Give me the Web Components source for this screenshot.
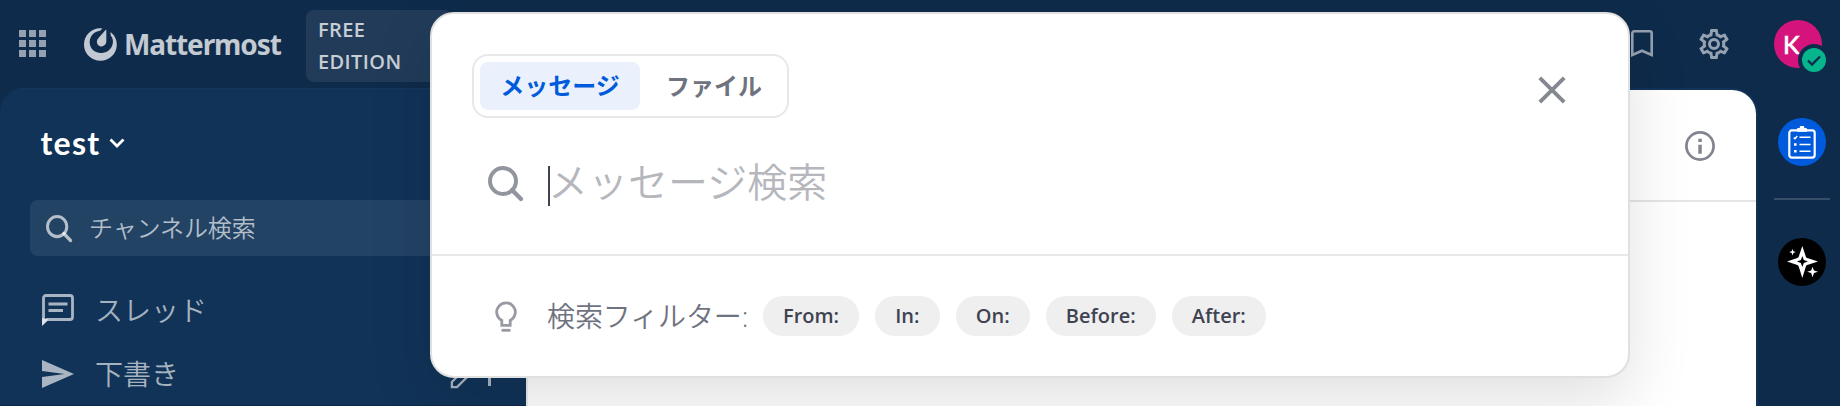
<!DOCTYPE html>
<html lang="ja">
<head>
<meta charset="utf-8">
<title>Mattermost</title>
<style>
html,body{margin:0;height:406px;overflow:hidden;background:#0f2b4b}
body{font-family:"Open Sans","Noto Sans CJK JP",sans-serif}
</style>
</head>
<body>
<mm-app></mm-app>
<script>
function define(name, css, html){
  customElements.define(name, class extends HTMLElement{
    constructor(){
      super();
      this.attachShadow({mode:'open'}).innerHTML = '<style>*{box-sizing:border-box}svg{display:block;overflow:visible;flex:none}' + css + '</style>' + html;
    }
  });
}

/* Icon set, each drawn in its own view box */
const ICONS = {
  apps:['0 0 28 28','<path fill="currentColor" d="M0 0h7v7H0zM10 0h7v7h-7zM20 0h7v7h-7zM0 10h7v7H0zM10 10h7v7h-7zM20 10h7v7h-7zM0 20h7v7H0zM10 20h7v7h-7zM20 20h7v7h-7z"/>'],
  logo:['0 0 33 33','<path fill="currentColor" d="M18.4.3C8.7-1 0 6.500 0 16.400A16.400 16.400 0 0 0 32.800 16.400C32.800 11.200 30.400 6.800 26.500 3.900L26.700 7.400C28.700 9.600 29.300 12.300 28.800 15.300C27.900 21.300 22.700 25.300 16.800 25C10.400 24.700 5.900 20.500 5.700 14.500C5.500 8.500 10.100 3.300 16.200 2.800Z"/><path fill="currentColor" d="M21.800 1.700C22.200 1.600 22.300 1.900 22.300 2.200V13.600C22.300 16.200 20.400 18.200 17.800 18.400C14.900 18.500 12.700 16.300 12.900 13.400C13 12 13.700 11 14.500 10Z"/>'],
  search:['0 0 35 35','<circle cx="15" cy="15" r="13" fill="none" stroke="currentColor" stroke-width="4"/><path d="M24 24l9 9" stroke="currentColor" stroke-width="4.4" stroke-linecap="round"/>'],
  thread:['0 0 32 32','<path d="M1.500 28.500V4a2.500 2.500 0 0 1 2.500-2.500h24A2.500 2.500 0 0 1 30.500 4v19a2.500 2.500 0 0 1-2.500 2.500H4.800z" fill="none" stroke="currentColor" stroke-width="2.800"/><path d="M0 24v8l6.500-6.500z" fill="currentColor"/><path d="M6.500 10H25.500M6.500 16.500H21" stroke="currentColor" stroke-width="2.800"/>'],
  send:['0 0 32 28','<path fill="currentColor" d="M0 28L32 14 0 0v10.900L22.500 14 0 17.100z"/>'],
  pencil:['0 0 32 32','<path d="M2 30v-5.500L23 3.500l5.500 5.500L7.500 30z" fill="none" stroke="currentColor" stroke-width="2.400"/>'],
  close:['0 0 28 28','<path d="M1.800 1.800l24.400 24.400M26.200 1.800L1.800 26.200" stroke="currentColor" stroke-width="3.900"/>'],
  bulb:['0 0 22 31','<path d="M6.800 24.300v-4.900A9.300 9.300 0 1 1 15.200 19.400v4.900z" fill="none" stroke="currentColor" stroke-width="2.800"/><path d="M6.500 29.300h9" stroke="currentColor" stroke-width="2.800"/>'],
  bookmark:['0 0 22 28','<path d="M1.300 25V3.200A1.900 1.900 0 0 1 3.200 1.300H18.800A1.900 1.900 0 0 1 20.700 3.200V25L11 20.700z" fill="none" stroke="currentColor" stroke-width="2.600"/>'],
  gear:['2 2 20 20','<path fill="currentColor" d="M12 8a4 4 0 0 1 4 4 4 4 0 0 1-4 4 4 4 0 0 1-4-4 4 4 0 0 1 4-4m0 2a2 2 0 0 0-2 2 2 2 0 0 0 2 2 2 2 0 0 0 2-2 2 2 0 0 0-2-2m-2 12c-.25 0-.46-.18-.5-.42l-.37-2.650c-.63-.25-1.170-.59-1.690-.99l-2.490 1.010c-.22.08-.49 0-.61-.22l-2-3.460a.493.493 0 0 1 .12-.64l2.110-1.660L4.500 12l.07-1-2.110-1.630a.493.493 0 0 1-.12-.64l2-3.460c.12-.22.39-.31.61-.22l2.490 1c.52-.39 1.060-.73 1.690-.98l.37-2.650c.04-.24.25-.42.5-.42h4c.25 0 .46.18.5.42l.37 2.650c.63.25 1.170.59 1.690.98l2.490-1c.22-.09.49 0 .61.22l2 3.460c.13.22.07.49-.12.64L19.430 11l.07 1-.07 1 2.110 1.630c.19.15.25.42.12.64l-2 3.460c-.12.22-.39.31-.61.22l-2.490-1c-.52.39-1.060.73-1.690.98l-.37 2.650c-.04.24-.25.42-.5.42zm1.250-18-.37 2.610c-1.200.25-2.260.89-3.030 1.780L5.440 7.350l-.75 1.300L6.800 10.200a5.550 5.550 0 0 0 0 3.600l-2.120 1.560.75 1.300 2.430-1.040c.77.88 1.820 1.520 3.010 1.760l.37 2.620h1.520l.37-2.610c1.190-.25 2.240-.89 3.010-1.770l2.430 1.040.75-1.300-2.120-1.550c.4-1.170.4-2.440 0-3.610l2.110-1.550-.75-1.300-2.410 1.040a5.420 5.420 0 0 0-3.030-1.770L12.750 4z"/>'],
  info:['0 0 30 30','<circle cx="15" cy="15" r="13.600" fill="none" stroke="currentColor" stroke-width="2.700"/><path d="M13.300 13.700h3.500v9h-3.500zM13.300 7.700h3.500v3.200h-3.500z" fill="currentColor"/>'],
  chevron:['0 0 16 10','<path d="M1.500 1.500L8 8l6.500-6.500" fill="none" stroke="currentColor" stroke-width="2.800"/>'],
  check:['0 0 14 11','<path d="M1 5.500L5 9.500 13 1.500" fill="none" stroke="currentColor" stroke-width="2.300"/>'],
  clipboard:['0 0 28 32','<rect x="1.300" y="4.300" width="25.400" height="26.400" rx="2.500" fill="none" stroke="currentColor" stroke-width="2.200"/><path d="M9 5.500V3a1 1 0 0 1 1-1h1.800V.8a.8.800 0 0 1 .8-.8h2.800a.8.800 0 0 1 .8.800V2H18a1 1 0 0 1 1 1v2.500z" fill="currentColor"/><path d="M11.500 11H22.500M11.500 18H22.500M11.500 24.500H22.500" stroke="currentColor" stroke-width="1.500"/><path d="M6 18h2.600M6 24.500h2.600" stroke="currentColor" stroke-width="2.400"/><path d="M5.800 11.300l1.200 1 2.200-2.600" fill="none" stroke="currentColor" stroke-width="1.500"/>'],
  sparkle:['0 0 31 32','<path fill="currentColor" fill-rule="evenodd" d="M15.300 0L18.800 10.500Q19 11.500 20.200 12L31 15.500 20.200 19.100Q19.200 19.500 18.800 20.700L15.300 32 11.800 20.700Q11.400 19.500 10.300 19.100L0 15.500 10.300 12Q11.400 11.500 11.800 10.500zM15.300 10.100L13.900 14 9.900 15.500l4 1.500 1.400 4 1.500-4 4-1.500-4-1.500z"/><path fill="currentColor" d="M5.500 3l.9 2.300 2.300.7-2.300.9L5.500 9.500l-.8-2.600L2.300 6l2.400-.7zM25.500 20.800l1.500 3.600 4 1.300-4 1.400-1.500 4.100-1.300-4.100-4-1.400 4-1.300z"/>']
};
customElements.define('mm-icon', class extends HTMLElement{
  constructor(){
    super();
    this.attachShadow({mode:'open'});
  }
  connectedCallback(){
    const [box, body] = ICONS[this.getAttribute('name')];
    this.shadowRoot.innerHTML = '<style>:host{display:block;flex:none}svg{display:block;width:100%;height:100%;overflow:visible}</style><svg viewBox="' + box + '" preserveAspectRatio="none">' + body + '</svg>';
  }
});

define('mm-header', `
:host{display:flex;height:88px;padding:0 18px 0 18.500px;justify-content:space-between;color:rgba(255,255,255,.75)}
.left{display:flex;align-items:center}
.right{display:flex;align-items:center}
.apps{width:28px;height:28px;color:rgba(255,255,255,.56);margin-right:37px}
.logo{width:33px;height:33px;margin-right:7.500px}
.brand{width:155px;font:700 28px/38px "Noto Sans","Open Sans",sans-serif;white-space:nowrap;margin-right:26.500px;letter-spacing:-1.100px}
.edition{width:146px;height:72px;margin-top:4px;padding:4px 12.500px;border-radius:8px;background:rgba(255,255,255,.08);font:600 20px/32px "Open Sans",sans-serif;letter-spacing:.4px}
.edition span{display:block}
.bm{width:22px;height:28px;color:rgba(255,255,255,.56);margin-right:46px}
.gear{width:30px;height:30px;color:rgba(255,255,255,.56);margin-right:45px}
.avatar{position:relative;width:48px;height:48px;border-radius:50%;background:#d4147c;color:#fff;font:400 25px/48px Lato,sans-serif;-webkit-text-stroke:.7px #fff;padding-left:9px}
.status{position:absolute;left:24px;top:24px;width:32px;height:32px;border-radius:50%;border:4px solid #0f2b4b;background:#06b58b;color:#0f2b4b;display:flex;align-items:center;justify-content:center}
.status mm-icon{width:14px;height:11px}`,
`<div class="left"><mm-icon class="apps" name="apps"></mm-icon><mm-icon class="logo" name="logo"></mm-icon><div class="brand"><span>Mattermost</span></div><div class="edition"><span>FREE</span><span>EDITION</span></div></div>
<div class="right"><mm-icon class="bm" name="bookmark"></mm-icon><mm-icon class="gear" name="gear"></mm-icon><div class="avatar">K<div class="status"><mm-icon name="check"></mm-icon></div></div></div>`);

define('mm-row', `
:host{display:flex;align-items:center;height:64px;padding-left:42px;color:rgba(255,255,255,.64);font:350 28px/40px "Open Sans","Noto Sans CJK JP",sans-serif}
.text{margin-left:21px}`,
`<slot name="icon"></slot><span class="text"><slot></slot></span><slot name="extra"></slot>`);

define('mm-sidebar', `
:host{display:block;width:526px;height:318px;background:#113358;border-top:1px solid #16365a;border-bottom:1px solid #0d2846;border-top-left-radius:24px;overflow:hidden}
.team{display:flex;align-items:center;height:110px;padding:0 0 2px 40.500px;color:#fff;font:700 32px/40px Lato,sans-serif;letter-spacing:1.300px}
.chev{width:16px;height:10px;margin:0 0 0 8px}
.find{display:flex;align-items:center;height:56px;margin:1px 30px 22px;padding-left:16px;border-radius:8px;background:rgba(255,255,255,.08);color:rgba(255,255,255,.66);font:350 24px/36px "Open Sans","Noto Sans CJK JP",sans-serif}
.find mm-icon{width:26px;height:27px;margin-right:17px}
.find span{letter-spacing:-.1px}
.thread{width:32px;height:32px}.send{width:32px;height:28px}
.tail{display:flex;align-items:center;margin-left:271px;gap:8px}
.tail mm-icon{width:30px;height:30px}
.bar{width:3px;height:24px;background:currentColor}`,
`<div class="team"><span>test</span><mm-icon class="chev" name="chevron"></mm-icon></div>
<div class="find"><mm-icon name="search"></mm-icon><span>チャンネル検索</span></div>
<mm-row><mm-icon slot="icon" class="thread" name="thread"></mm-icon>スレッド</mm-row>
<mm-row><mm-icon slot="icon" class="send" name="send"></mm-icon>下書き<div slot="extra" class="tail"><mm-icon name="pencil"></mm-icon><div class="bar"></div></div></mm-row>`);

define('mm-channel', `
:host{display:block;flex:1;height:318px;padding:2px 2px 0 0;background:#113358;border-top-right-radius:26px}
.panel{height:316px;background:#fff;border-left:2px solid #ebebeb;border-top-right-radius:24px}
.head{display:flex;justify-content:flex-end;align-items:center;height:112px;padding:2px 41px 0 0;border-bottom:2px solid #e5e5e7;color:#82858f}
mm-icon{width:30px;height:30px}`,
`<div class="panel"><div class="head"><mm-icon name="info"></mm-icon></div></div>`);

define('mm-rail', `
:host{display:flex;flex-direction:column;width:82px;padding:30px 0 0 16px}
.app{width:48px;height:48px;margin-left:4px;border-radius:50%;display:flex;align-items:center;justify-content:center;color:#fff}
.blue{background:#005bdc}.black{background:#000;padding-left:1px}
.blue mm-icon{width:28px;height:33px}.black mm-icon{width:31px;height:32px}
.line{width:56px;height:2px;margin:32px 0 38px;background:rgba(255,255,255,.17)}`,
`<div class="app blue"><mm-icon name="clipboard"></mm-icon></div><div class="line"></div><div class="app black"><mm-icon name="sparkle"></mm-icon></div>`);

define('mm-tab', `
:host{display:flex;align-items:center;justify-content:center;height:48px;width:148px;flex:none;border-radius:8px;color:#6f737f;font:700 24px/36px "Open Sans","Noto Sans CJK JP",sans-serif}
:host([active]){width:160px;background:#ebf1fc;color:#005bdc}`,
`<slot></slot>`);

define('mm-chip', `
:host{display:flex;align-items:center;justify-content:center;height:40px;padding:0 20px;border-radius:20px;background:#efeff0;color:#3f4350;font:600 20px/30px "Open Sans",sans-serif}`,
`<slot></slot>`);

define('mm-search-dialog', `
:host{display:block;width:1200px;height:366px;border:2px solid #e0e0e0;border-radius:24px;background:#fff;box-shadow:0 24px 64px rgba(0,0,0,.12);box-sizing:border-box}
.top{display:flex;justify-content:space-between;padding:40px 62px 0 40px}
.tabs{display:flex;width:317px;height:64px;padding:6px;border:2px solid #e8e8ea;border-radius:16px}
.close{width:28px;height:28px;margin-top:22px;color:#858891}
.input{display:flex;align-items:center;height:138px;padding:0 0 5px 56px;border-bottom:2px solid #e8e8ea;font:350 40px/56px "Open Sans","Noto Sans CJK JP",sans-serif;color:#b5b7bd}
.input span{margin:-3px 0 0 -2px}
.mag{width:35px;height:35px;color:#92959d}
.caret{width:2px;height:40px;margin:4px 0 0 25px;background:#3f4350}
.hints{display:flex;align-items:center;height:120px;padding-left:62.500px;color:#6f737f}
.bulb{width:22px;height:31px;color:#979aa2}
.label{width:200px;margin:0 16px 0 30.500px;white-space:nowrap;font:350 28px/40px "Open Sans","Noto Sans CJK JP",sans-serif;letter-spacing:-.1px}
.chips{display:flex;gap:16.200px}`,
`<div class="top"><div class="tabs"><mm-tab active>メッセージ</mm-tab><mm-tab>ファイル</mm-tab></div><mm-icon class="close" name="close"></mm-icon></div>
<div class="input"><mm-icon class="mag" name="search"></mm-icon><div class="caret"></div><span>メッセージ検索</span></div>
<div class="hints"><mm-icon class="bulb" name="bulb"></mm-icon><span class="label">検索フィルター:</span><div class="chips"><mm-chip>From:</mm-chip><mm-chip>In:</mm-chip><mm-chip>On:</mm-chip><mm-chip>Before:</mm-chip><mm-chip>After:</mm-chip></div></div>`);

define('mm-app', `
:host{display:block;position:relative;width:1840px;height:406px;background:#0f2b4b;overflow:hidden}
.body{display:flex;height:318px}
mm-search-dialog{position:absolute;left:430px;top:12px}`,
`<mm-header></mm-header><div class="body"><mm-sidebar></mm-sidebar><mm-channel></mm-channel><mm-rail></mm-rail></div><mm-search-dialog></mm-search-dialog>`);
</script>
</body>
</html>
